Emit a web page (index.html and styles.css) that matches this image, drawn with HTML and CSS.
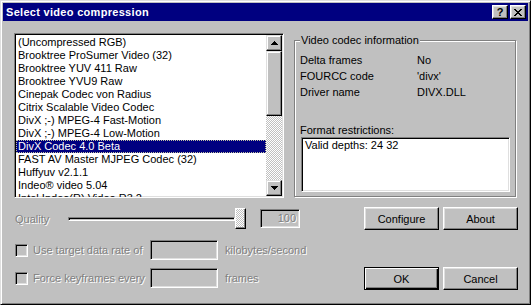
FILE: index.html
```html
<!DOCTYPE html>
<html lang="en">
<head>
    <meta charset="UTF-8">
    <title>Select video compression</title>
    <link rel="stylesheet" href="styles.css">
</head>
<body>
    <div class="window">
        <div class="titlebar">
            <span class="title">Select video compression</span>
            <div class="caption-buttons">
                <span class="cap-btn help">?</span>
                <span class="cap-btn close">
                    <svg width="8" height="7" viewBox="0 0 8 7"><path d="M0 0h2v1H0z M6 0h2v1H6z M1 1h2v1H1z M5 1h2v1H5z M2 2h4v1H2z M3 3h2v1H3z M2 4h4v1H2z M1 5h2v1H1z M5 5h2v1H5z M0 6h2v1H0z M6 6h2v1H6z" fill="#000"/></svg>
                </span>
            </div>
        </div>

        <div class="client">
            <!-- codec list + info -->
            <div class="top-row">
                <div class="listbox">
                    <ul class="items">
                        <li>(Uncompressed RGB)</li>
                        <li>Brooktree ProSumer Video (32)</li>
                        <li>Brooktree YUV 411 Raw</li>
                        <li>Brooktree YVU9 Raw</li>
                        <li>Cinepak Codec von Radius</li>
                        <li>Citrix Scalable Video Codec</li>
                        <li>DivX ;-) MPEG-4 Fast-Motion</li>
                        <li>DivX ;-) MPEG-4 Low-Motion</li>
                        <li class="selected">DivX Codec 4.0 Beta</li>
                        <li>FAST AV Master MJPEG Codec (32)</li>
                        <li>Huffyuv v2.1.1</li>
                        <li>Indeo® video 5.04</li>
                        <li>Intel Indeo(R) Video R3.2</li>
                    </ul>
                    <div class="scrollbar">
                        <span class="sb-btn">
                            <svg width="7" height="4" viewBox="0 0 7 4"><path d="M3 0h1v1h1v1h1v1h1v1H0V3h1V2h1V1h1z" fill="#000"/></svg>
                        </span>
                        <span class="sb-thumb"></span>
                        <span class="sb-track"></span>
                        <span class="sb-btn">
                            <svg width="7" height="4" viewBox="0 0 7 4"><path d="M0 0h7v1H6v1H5v1H4v1H3V3H2V2H1V1H0z" fill="#000"/></svg>
                        </span>
                    </div>
                </div>

                <div class="group">
                    <span class="group-label">Video codec information</span>
                    <div class="info-row"><span>Delta frames</span><span>No</span></div>
                    <div class="info-row"><span>FOURCC code</span><span>'divx'</span></div>
                    <div class="info-row"><span>Driver name</span><span>DIVX.DLL</span></div>
                    <div class="restrict-label">Format restrictions:</div>
                    <div class="restrict-box">Valid depths: 24 32</div>
                </div>
            </div>

            <!-- quality slider -->
            <div class="quality-row">
                <span class="disabled quality-label">Quality</span>
                <div class="slider">
                    <span class="slider-track"></span>
                    <span class="slider-thumb"></span>
                </div>
                <span class="edit quality-edit disabled">100</span>
                <div class="buttons">
                    <span class="button">Configure</span>
                    <span class="button">About</span>
                </div>
            </div>

            <!-- data rate / keyframes -->
            <div class="bottom-row">
                <div class="options">
                    <div class="option">
                        <span class="checkbox"></span>
                        <span class="disabled option-label">Use target data rate of</span>
                        <span class="edit option-edit"></span>
                        <span class="disabled">kilobytes/second</span>
                    </div>
                    <div class="option">
                        <span class="checkbox"></span>
                        <span class="disabled option-label">Force keyframes every</span>
                        <span class="edit option-edit"></span>
                        <span class="disabled">frames</span>
                    </div>
                </div>
                <div class="buttons dialog-buttons">
                    <span class="button default">OK</span>
                    <span class="button">Cancel</span>
                </div>
            </div>
        </div>
    </div>
</body>
</html>
```

FILE: styles.css
```css
body {
    margin: 0;
    font-family: "Liberation Sans", Arial, sans-serif;
    font-size: 11px;
    color: #000;
    background: #c0c0c0;
}
.window {
    box-sizing: border-box;
    width: 531px;
    height: 305px;
    padding: 2px;
    background: #c0c0c0;
    border: 1px solid;
    border-color: #dfdfdf #000 #000 #dfdfdf;
    box-shadow: inset 1px 1px #fff, inset -1px -1px #808080;
}

/* title bar */
.titlebar {
    height: 18px;
    background: #000080;
    display: flex;
    align-items: center;
    justify-content: space-between;
    padding: 0 2px 0 3px;
}
.title {
    color: #fff;
    font-weight: bold;
    font-size: 11px;
    letter-spacing: 0.3px;
}
.caption-buttons {
    display: flex;
    gap: 2px;
}
.cap-btn {
    box-sizing: border-box;
    width: 16px;
    height: 14px;
    display: flex;
    align-items: center;
    justify-content: center;
    background: #c0c0c0;
    border: 1px solid;
    border-color: #fff #000 #000 #fff;
    box-shadow: inset -1px -1px #808080, inset 1px 1px #dfdfdf;
}
.help {
    font-weight: bold;
    font-size: 11px;
    line-height: 1;
    padding-top: 1px;
}

.client {
    padding: 12px 10px 0 11px;
}

/* list box */
.top-row {
    display: flex;
    align-items: flex-start;
    gap: 10px;
}
.listbox {
    box-sizing: border-box;
    width: 270px;
    height: 165px;
    display: flex;
    background: #fff;
    border: 1px solid;
    border-color: #808080 #fff #fff #808080;
    box-shadow: inset 1px 1px #000, inset -1px -1px #dfdfdf;
    padding: 1px;
}
.items {
    list-style: none;
    margin: 0;
    padding: 1px 0 0;
    flex: 1;
    overflow: hidden;
    height: 161px;
}
.items li {
    height: 13px;
    line-height: 13px;
    padding-left: 2px;
    white-space: nowrap;
}
.items li.selected {
    background: #000080;
    color: #fff;
    outline: 1px dotted #c0c0a0;
    outline-offset: -1px;
}
.scrollbar {
    width: 16px;
    display: flex;
    flex-direction: column;
}
.sb-btn, .sb-thumb {
    box-sizing: border-box;
    width: 16px;
    background: #c0c0c0;
    border: 1px solid;
    border-color: #dfdfdf #000 #000 #dfdfdf;
    box-shadow: inset -1px -1px #808080, inset 1px 1px #fff;
}
.sb-btn {
    height: 16px;
    display: flex;
    align-items: center;
    justify-content: center;
}
.sb-thumb {
    height: 65px;
}
.sb-track {
    flex: 1;
    background: repeating-conic-gradient(#c0c0c0 0 25%, #fff 0 50%) 0 0 / 2px 2px;
}

/* info group */
.group {
    position: relative;
    box-sizing: border-box;
    width: 222px;
    height: 157px;
    margin-top: 7px;
    padding: 11px 5px 4px 5px;
    border: 1px solid #808080;
    box-shadow: inset 1px 1px #fff, 1px 1px #fff;
    display: flex;
    flex-direction: column;
}
.group-label {
    position: absolute;
    top: -7px;
    left: 5px;
    padding: 0 1px;
    line-height: 13px;
    background: #c0c0c0;
}
.info-row {
    display: grid;
    grid-template-columns: 117px auto;
    line-height: 16px;
}
.restrict-label {
    margin-top: 24px;
    line-height: 13px;
}
.restrict-box {
    flex: 1;
    margin-left: 1px;
    padding: 1px 3px;
    line-height: 13px;
    background: #fff;
    border: 1px solid;
    border-color: #808080 #fff #fff #808080;
    box-shadow: inset 1px 1px #000, inset -1px -1px #dfdfdf;
}

/* shared controls */
.disabled {
    color: #808080;
    text-shadow: 1px 1px #fff;
}
.edit {
    box-sizing: border-box;
    height: 20px;
    background: #c0c0c0;
    border: 1px solid;
    border-color: #808080 #fff #fff #808080;
    box-shadow: inset 1px 1px #000, inset -1px -1px #dfdfdf;
}
.button {
    box-sizing: border-box;
    width: 75px;
    height: 23px;
    display: flex;
    align-items: center;
    justify-content: center;
    background: #c0c0c0;
    border: 1px solid;
    border-color: #fff #000 #000 #fff;
    box-shadow: inset -1px -1px #808080, inset 1px 1px #dfdfdf;
}
.button.default {
    border: 1px solid #000;
    box-shadow: inset 1px 1px #fff, inset -1px -1px #000, inset -2px -2px #808080;
}
.buttons {
    display: flex;
    gap: 4px;
}

/* quality row */
.quality-row {
    display: flex;
    align-items: center;
    height: 23px;
    margin-top: 9px;
}
.quality-label {
    width: 53px;
    padding-left: 1px;
}
.slider {
    width: 178px;
    height: 21px;
    display: flex;
    align-items: center;
}
.slider-track {
    box-sizing: border-box;
    flex: 1;
    height: 4px;
    border: 1px solid;
    border-color: #808080 #fff #fff #808080;
    box-shadow: inset 1px 1px #000;
}
.slider-thumb {
    box-sizing: border-box;
    width: 11px;
    height: 21px;
    border: 1px solid;
    border-color: #fff #000 #000 #fff;
    box-shadow: inset -1px -1px #808080;
    background: repeating-conic-gradient(#c0c0c0 0 25%, #fff 0 50%) 0 0 / 2px 2px;
}
.quality-edit {
    width: 40px;
    height: 19px;
    margin-left: 14px;
    padding-right: 3px;
    text-align: right;
    line-height: 17px;
}
.quality-row .buttons {
    margin-left: auto;
}

/* options */
.bottom-row {
    display: flex;
    margin-top: 10px;
}
.options {
    display: flex;
    flex-direction: column;
    gap: 8px;
}
.option {
    display: flex;
    align-items: center;
    height: 20px;
}
.checkbox {
    box-sizing: border-box;
    width: 13px;
    height: 13px;
    margin: 0 5px 0 1px;
    background: #c0c0c0;
    border: 1px solid;
    border-color: #808080 #fff #fff #808080;
    box-shadow: inset 1px 1px #000, inset -1px -1px #dfdfdf;
}
.option-label {
    width: 117px;
}
.option-edit {
    width: 68px;
    margin-right: 7px;
}
.dialog-buttons {
    margin-left: auto;
    margin-top: 27px;
}
```
